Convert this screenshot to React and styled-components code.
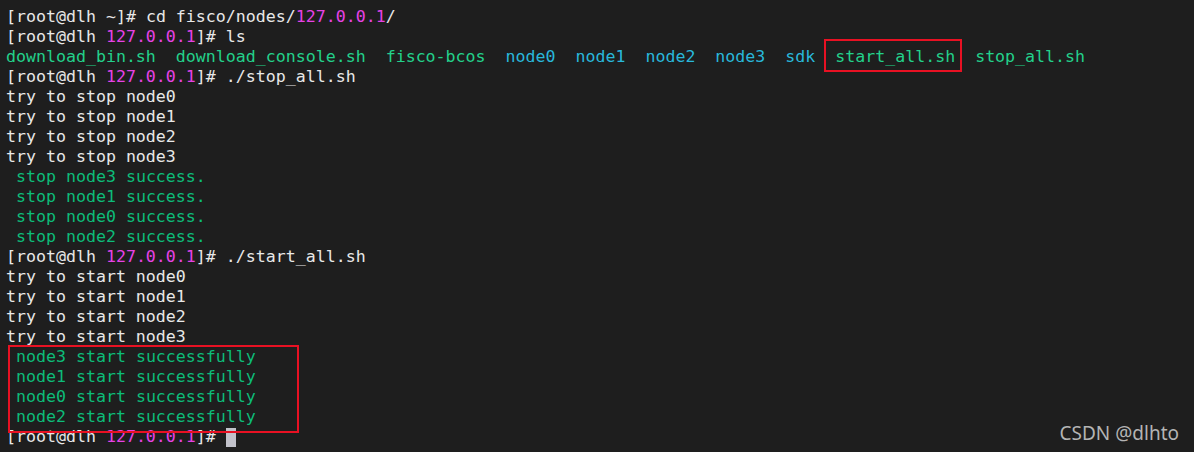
import React from 'react';
import styled, { createGlobalStyle } from 'styled-components';

const GlobalStyle = createGlobalStyle`
  html, body {
    margin: 0;
    padding: 0;
    background: #1e1e1e;
  }
`;

const Terminal = styled.div`
  position: relative;
  width: 1194px;
  height: 452px;
  box-sizing: border-box;
  padding: 7px 0 0 6px;
  background: #1e1e1e;
  color: #e8e8e8;
  font-family: 'DejaVu Sans Mono', 'Liberation Mono', monospace;
  font-size: 16.6px;
  line-height: 20px;
  overflow: hidden;
`;

const Line = styled.div`
  white-space: pre;
  height: 20px;
`;

const Span = styled.span`
  color: ${(p) => p.$c || 'inherit'};
`;

const Cursor = styled.span`
  display: inline-block;
  width: 10px;
  height: 19px;
  background: #c2c2ca;
  vertical-align: -5px;
`;

const Mark = styled.div`
  position: absolute;
  left: ${(p) => p.$x}px;
  top: ${(p) => p.$y}px;
  width: ${(p) => p.$w}px;
  height: ${(p) => p.$h}px;
  border: 2px solid #e81123;
  box-sizing: border-box;
  pointer-events: none;
`;

const Watermark = styled.div`
  position: absolute;
  right: 15px;
  bottom: 9px;
  font-family: 'Noto Sans', 'DejaVu Sans', sans-serif;
  font-size: 19px;
  color: #b4b4b4;
`;

const MAG = '#e642e6';
const BLUE = '#29b8db';
const BGREEN = '#23d18b';
const GREEN = '#0dbc79';

const Prompt = ({ dir, magenta }) => (
  <>
    [root@dlh {magenta ? <Span $c={MAG}>{dir}</Span> : dir}]#{' '}
  </>
);

const App = () => {
  return (
    <>
      <GlobalStyle />
      <Terminal>
        <Line>
          <Prompt dir="~" />cd fisco/nodes/<Span $c={MAG}>127.0.0.1</Span>/
        </Line>
        <Line>
          <Prompt dir="127.0.0.1" magenta />ls
        </Line>
        <Line>
          <Span $c={BGREEN}>download_bin.sh</Span>{'  '}
          <Span $c={BGREEN}>download_console.sh</Span>{'  '}
          <Span $c={BGREEN}>fisco-bcos</Span>{'  '}
          <Span $c={BLUE}>node0</Span>{'  '}
          <Span $c={BLUE}>node1</Span>{'  '}
          <Span $c={BLUE}>node2</Span>{'  '}
          <Span $c={BLUE}>node3</Span>{'  '}
          <Span $c={BLUE}>sdk</Span>{'  '}
          <Span $c={BGREEN}>start_all.sh</Span>{'  '}
          <Span $c={BGREEN}>stop_all.sh</Span>
        </Line>
        <Line>
          <Prompt dir="127.0.0.1" magenta />./stop_all.sh
        </Line>
        {[0, 1, 2, 3].map((n) => (
          <Line key={'ts' + n}>try to stop node{n}</Line>
        ))}
        {[3, 1, 0, 2].map((n) => (
          <Line key={'ss' + n}>
            <Span $c={GREEN}> stop node{n} success.</Span>
          </Line>
        ))}
        <Line>
          <Prompt dir="127.0.0.1" magenta />./start_all.sh
        </Line>
        {[0, 1, 2, 3].map((n) => (
          <Line key={'tst' + n}>try to start node{n}</Line>
        ))}
        {[3, 1, 0, 2].map((n) => (
          <Line key={'st' + n}>
            <Span $c={GREEN}> node{n} start successfully</Span>
          </Line>
        ))}
        <Line>
          <Prompt dir="127.0.0.1" magenta />
          <Cursor />
        </Line>
        <Mark $x={824} $y={39} $w={138} $h={33} />
        <Mark $x={8} $y={345} $w={291} $h={88} />
        <Watermark>CSDN @dlhto</Watermark>
      </Terminal>
    </>
  );
};

export default App;
